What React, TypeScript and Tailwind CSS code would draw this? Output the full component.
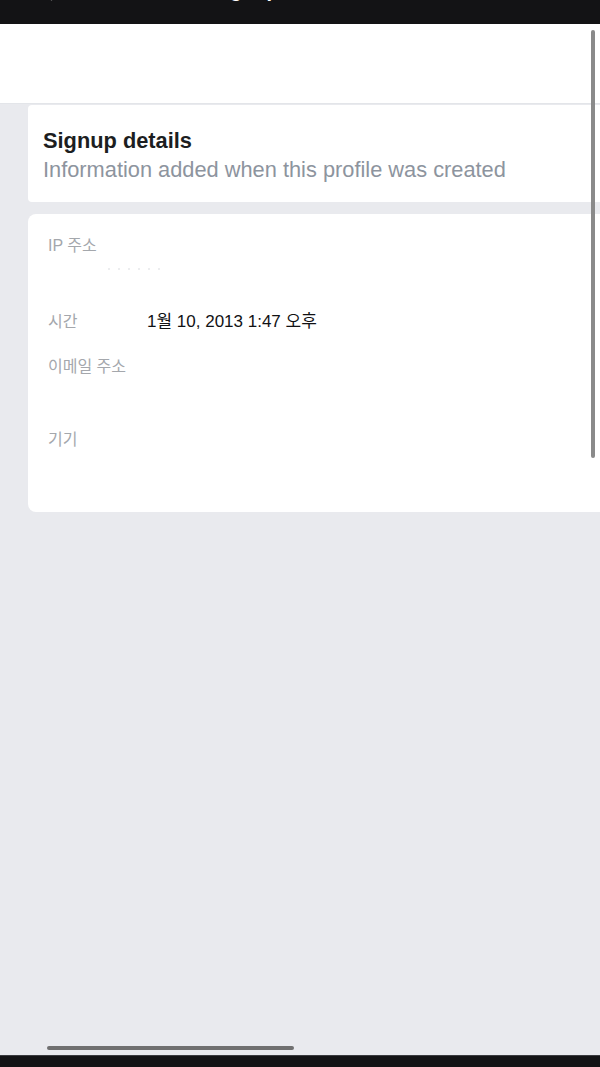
import React from "react";
import { ChevronLeft } from "lucide-react";

export default function App() {
  return (
    <div className="relative w-[600px] h-[1067px] overflow-hidden bg-[#e9eaee] flex flex-col font-['Liberation_Sans','Noto_Sans_CJK_KR',sans-serif]">
      {/* top bar (clipped title) */}
      <div className="h-[24px] shrink-0 bg-[#131315] overflow-hidden">
        <div className="flex items-start -mt-[22px] h-[24px]">
          <ChevronLeft size={28} strokeWidth={2.2} className="ml-[34px] mt-[0px] text-white shrink-0" />
          <span className="ml-[149px] text-[20px] leading-[24px] font-semibold text-white whitespace-nowrap">
            Signup 정보
          </span>
        </div>
      </div>

      {/* white header area */}
      <div className="h-[80px] shrink-0 bg-white border-b border-[#e3e5e9]" />

      {/* card 1 */}
      <div className="mt-[1px] ml-[28px] bg-white rounded-l-[4px] pt-[23px] pb-[19px] pl-[15px]">
        <div className="text-[21.8px] leading-[26px] font-bold text-[#1c1e21] whitespace-nowrap">Signup details</div>
        <div className="mt-[3px] text-[21.8px] leading-[26px] text-[#8d949e] whitespace-nowrap">
          Information added when this profile was created
        </div>
      </div>

      {/* card 2 */}
      <div className="mt-[12px] ml-[28px] h-[298px] bg-white rounded-l-[8px] pl-[20px] pt-[22px] text-[16px] leading-[20px]">
        <div className="text-[#a4a7ac]">IP 주소</div>
        <div className="mt-[12px] ml-[60px] flex gap-[8px] h-[3px]">
          <span className="w-[2px] h-[2px] rounded-full bg-[#e6e7ea]" />
          <span className="w-[2px] h-[2px] rounded-full bg-[#e6e7ea]" />
          <span className="w-[2px] h-[2px] rounded-full bg-[#e6e7ea]" />
          <span className="w-[2px] h-[2px] rounded-full bg-[#e6e7ea]" />
          <span className="w-[2px] h-[2px] rounded-full bg-[#e6e7ea]" />
          <span className="w-[2px] h-[2px] rounded-full bg-[#e6e7ea]" />
        </div>
        <div className="mt-[41px] flex items-baseline">
          <div className="w-[99px] text-[#a4a7ac]">시간</div>
          <div className="text-[17px] text-[#111214] whitespace-nowrap">1월 10, 2013 1:47 오후</div>
        </div>
        <div className="mt-[25px] text-[#a4a7ac]">이메일 주소</div>
        <div className="mt-[53px] text-[#a4a7ac]">기기</div>
      </div>

      {/* bottom */}
      <div className="mt-auto pb-[5px]">
        <div className="ml-[47px] w-[247px] h-[4px] rounded-full bg-[#707070]" />
      </div>
      <div className="h-[12px] shrink-0 bg-[#131315] border-t border-[#3a3b3f]" />

      {/* scrollbar overlay */}
      <div className="absolute right-[5px] top-[30px] h-[428px] w-[4px] rounded-full bg-[#8a8a8a]" />
    </div>
  );
}
